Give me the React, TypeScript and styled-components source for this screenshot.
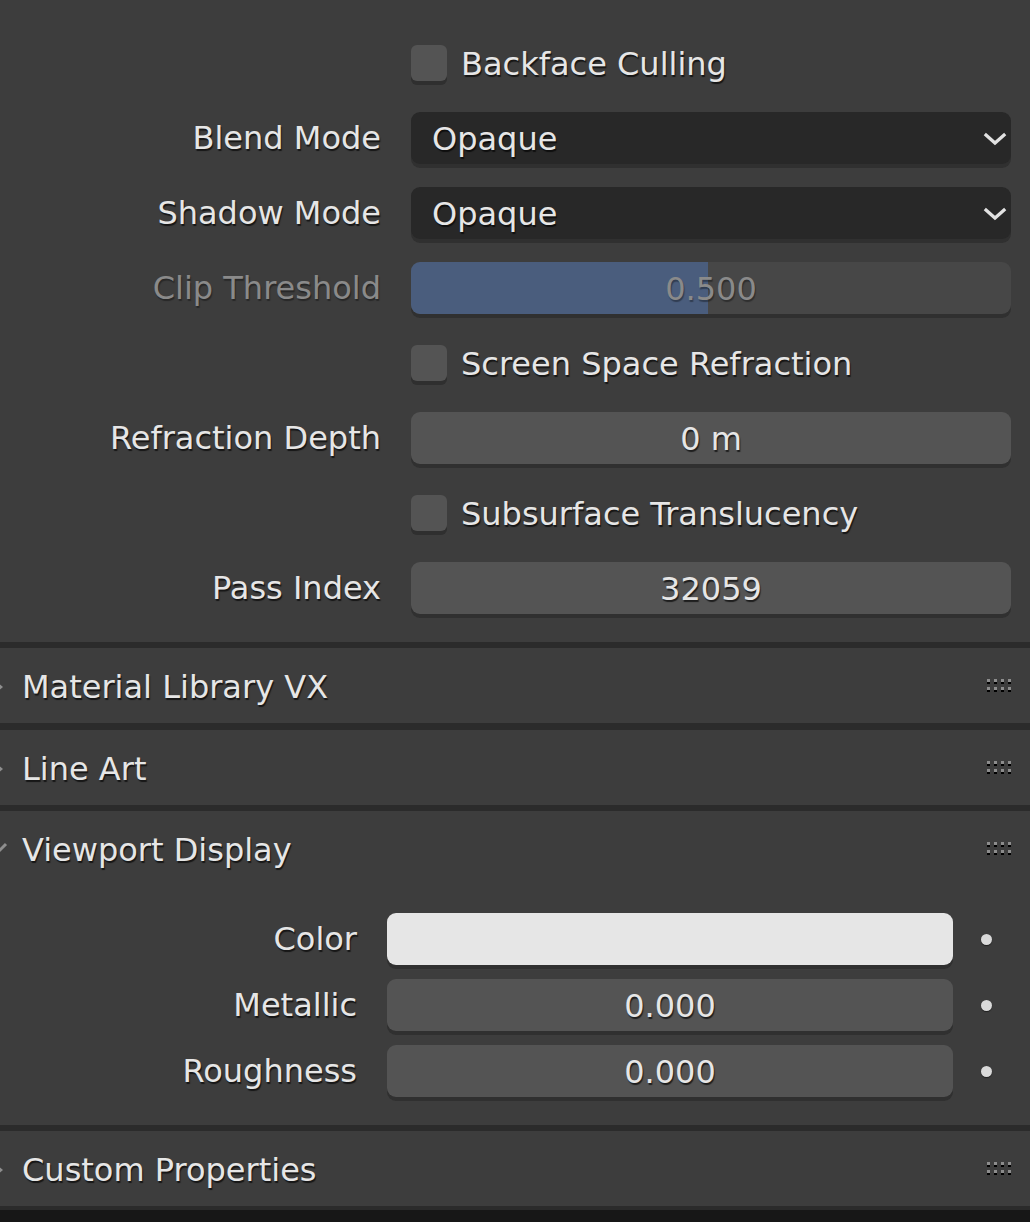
import React from "react";
import styled, { createGlobalStyle } from "styled-components";

const Global = createGlobalStyle`
  html, body { margin: 0; padding: 0; background: #3d3d3d; }
  body { font-family: "DejaVu Sans", "Liberation Sans", sans-serif; font-size: 32px; color: #e6e6e6; }
  * { box-sizing: border-box; }
`;

const Page = styled.div`
  width: 1030px;
  height: 1222px;
  overflow: hidden;
  background: #171717;
  display: flex;
  flex-direction: column;
`;

const Content = styled.div`
  background: #3d3d3d;
  padding: 37px 19px 26px 0;
  display: flex;
  flex-direction: column;
  gap: 21px;
`;

const Row = styled.div`
  height: 54px;
  display: flex;
  align-items: flex-start;
`;

const Label = styled.div<{ $w: number; $dim?: boolean }>`
  width: ${(p) => p.$w}px;
  flex: 0 0 auto;
  text-align: right;
  margin-right: 30px;
  height: 52px;
  line-height: 53px;
  white-space: nowrap;
  color: ${(p) => (p.$dim ? "#8a8a8a" : "#e6e6e6")};
  text-shadow: 1px 2px 1px rgba(0, 0, 0, ${(p) => (p.$dim ? 0.35 : 0.65)});
`;

const Shadowed = `text-shadow: 1px 2px 1px rgba(0,0,0,0.65);`;

const CheckWrap = styled.label`
  display: flex;
  align-items: center;
  gap: 14px;
  height: 54px;
  margin-left: 411px;
  ${Shadowed}
  white-space: nowrap;
`;

const CheckBox = styled.span`
  width: 36px;
  height: 36px;
  border-radius: 6px;
  background: #545454;
  box-shadow: 0 4px 0 #2f2f2f;
  margin-top: -2px;
`;

const fieldBase = `
  height: 52px;
  border-radius: 9px;
  box-shadow: 0 4px 0 #303030;
  position: relative;
  overflow: hidden;
  padding-top: 1px;
`;

const Dropdown = styled.div`
  ${fieldBase}
  flex: 1;
  background: #282828;
  display: flex;
  align-items: center;
  justify-content: space-between;
  padding-left: 21px;
  padding-right: 4px;
  ${Shadowed}
`;

const NumField = styled.div<{ $w?: number; $bg?: string }>`
  ${fieldBase}
  ${(p) => (p.$w ? `flex: 0 0 ${p.$w}px;` : "flex: 1;")}
  background: ${(p) => p.$bg || "#545454"};
  display: flex;
  align-items: center;
  justify-content: center;
  ${Shadowed}
`;

const SliderField = styled.div`
  ${fieldBase}
  flex: 1;
  background: #474747;
  display: flex;
  align-items: center;
  justify-content: center;
  color: #8a8a8a;
  text-shadow: 1px 2px 1px rgba(0, 0, 0, 0.35);
`;

const SliderFill = styled.div`
  position: absolute;
  left: 0;
  top: 0;
  bottom: 0;
  background: #4a5d7d;
`;

const SliderText = styled.span`
  position: relative;
`;

const Sep = styled.div<{ $h?: number; $c?: string }>`
  height: ${(p) => p.$h ?? 7}px;
  flex: 0 0 auto;
  background: ${(p) => p.$c || "#2b2b2b"};
`;

const Header = styled.div`
  height: 75px;
  flex: 0 0 auto;
  background: #3d3d3d;
  display: flex;
  align-items: center;
  padding-right: 19px;
  padding-top: 2px;
  ${Shadowed}
`;

const HeaderTitle = styled.div`
  flex: 1;
  margin-left: 14px;
  white-space: nowrap;
`;

const Grip = styled.div`
  display: grid;
  grid-template-columns: repeat(4, 3px);
  grid-template-rows: repeat(2, 3px);
  column-gap: 4px;
  row-gap: 5px;
  margin-top: -4px;
`;

const GripDot = styled.span`
  width: 3px;
  height: 3px;
  background: #8c8c8c;
  box-shadow: 0 2px 0 #000;
`;

const Sub = styled.div`
  background: #3d3d3d;
  padding: 27px 0 28px 0;
  display: flex;
  flex-direction: column;
  gap: 14px;
`;

const SubRow = styled.div`
  height: 52px;
  display: flex;
  align-items: center;
`;

const Deco = styled.div`
  width: 66px;
  display: flex;
  justify-content: center;
`;

const Dot = styled.span`
  width: 11px;
  height: 11px;
  border-radius: 50%;
  background: #dadada;
  box-shadow: 0 1px 1px rgba(0, 0, 0, 0.5);
`;

const Chevron = () => (
  <svg width="24" height="16" viewBox="0 0 24 16">
    <path d="M3 4 L12 12 L21 4" fill="none" stroke="#e2e2e2" strokeWidth="3.2" strokeLinecap="square" />
  </svg>
);

const Disclosure = ({ open }: { open?: boolean }) => (
  <svg width="8" height="20" viewBox="0 0 8 20" style={{ flex: "0 0 auto" }}>
    {open ? (
      <path d="M-6 4 L0 10 L6 4" fill="none" stroke="#8e8e8e" strokeWidth="3" />
    ) : (
      <path d="M-4 4 L3 10 L-4 16 Z" fill="#8e8e8e" />
    )}
  </svg>
);

const GripIcon = () => (
  <Grip>
    {Array.from({ length: 8 }).map((_, i) => (
      <GripDot key={i} />
    ))}
  </Grip>
);

const PanelHeader = ({ title, open }: { title: string; open?: boolean }) => (
  <Header>
    <Disclosure open={open} />
    <HeaderTitle>{title}</HeaderTitle>
    <GripIcon />
  </Header>
);

export default function App() {
  return (
    <Page>
      <Global />
      <Content>
        <Row>
          <CheckWrap>
            <CheckBox />
            Backface Culling
          </CheckWrap>
        </Row>
        <Row>
          <Label $w={381}>Blend Mode</Label>
          <Dropdown>
            Opaque
            <Chevron />
          </Dropdown>
        </Row>
        <Row>
          <Label $w={381}>Shadow Mode</Label>
          <Dropdown>
            Opaque
            <Chevron />
          </Dropdown>
        </Row>
        <Row>
          <Label $w={381} $dim>
            Clip Threshold
          </Label>
          <SliderField>
            <SliderFill style={{ width: `${0.495 * 100}%` }} />
            <SliderText>0.500</SliderText>
          </SliderField>
        </Row>
        <Row>
          <CheckWrap>
            <CheckBox />
            Screen Space Refraction
          </CheckWrap>
        </Row>
        <Row>
          <Label $w={381}>Refraction Depth</Label>
          <NumField>0 m</NumField>
        </Row>
        <Row>
          <CheckWrap>
            <CheckBox />
            Subsurface Translucency
          </CheckWrap>
        </Row>
        <Row>
          <Label $w={381}>Pass Index</Label>
          <NumField>32059</NumField>
        </Row>
      </Content>
      <Sep $h={6} />
      <PanelHeader title="Material Library VX" />
      <Sep />
      <PanelHeader title="Line Art" />
      <Sep $h={6} />
      <PanelHeader title="Viewport Display" open />
      <Sub>
        <SubRow>
          <Label $w={357}>Color</Label>
          <NumField $w={566} $bg="#e6e6e6" />
          <Deco>
            <Dot />
          </Deco>
        </SubRow>
        <SubRow>
          <Label $w={357}>Metallic</Label>
          <NumField $w={566}>0.000</NumField>
          <Deco>
            <Dot />
          </Deco>
        </SubRow>
        <SubRow>
          <Label $w={357}>Roughness</Label>
          <NumField $w={566}>0.000</NumField>
          <Deco>
            <Dot />
          </Deco>
        </SubRow>
      </Sub>
      <Sep $h={6} />
      <PanelHeader title="Custom Properties" />
      <Sep $h={4} />
    </Page>
  );
}
